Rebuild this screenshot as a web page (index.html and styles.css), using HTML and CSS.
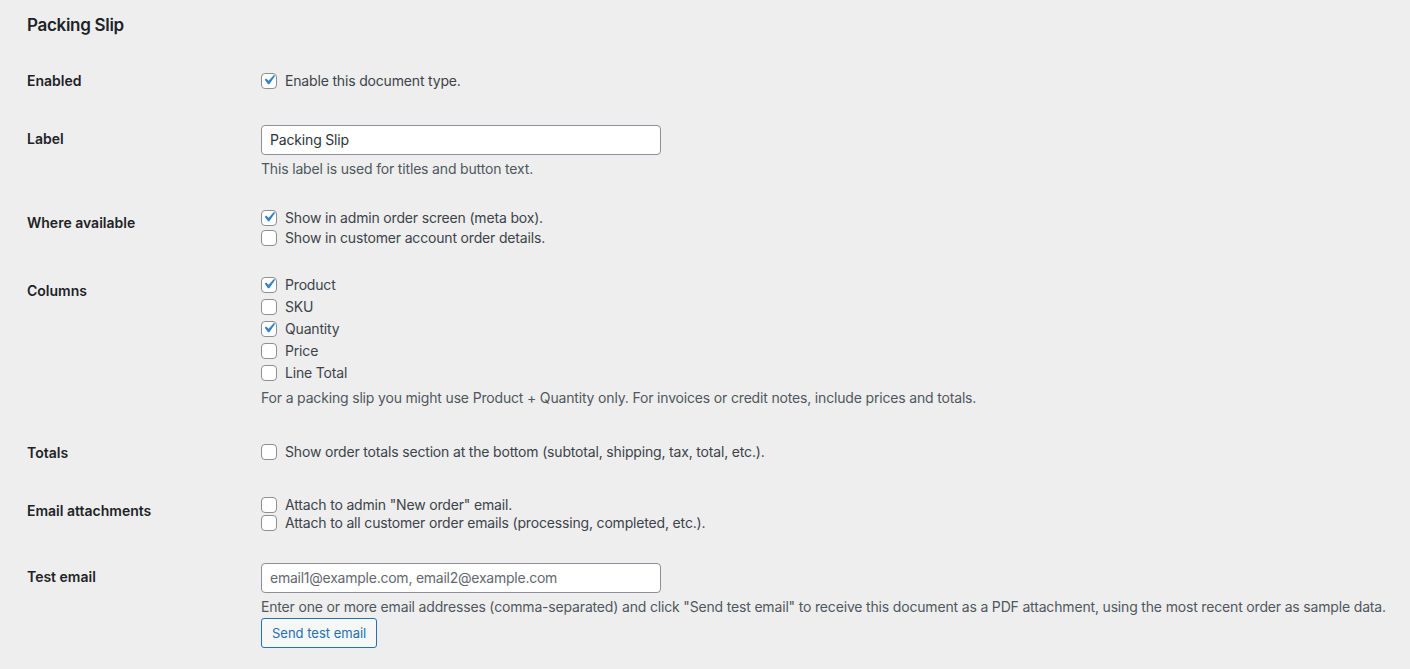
FILE: index.html
```html
<!DOCTYPE html>
<html lang="en">
<head>
<meta charset="utf-8">
<title>Packing Slip</title>
<link rel="stylesheet" href="styles.css">
</head>
<body>
<div class="page">
  <h2 class="title">Packing Slip</h2>

  <div class="row row-enabled">
    <div class="row-label">Enabled</div>
    <div class="row-field">
      <label class="check"><span class="cb on"><svg viewBox="0 0 20 20"><path d="M14.83 4.89l1.34.94-5.81 8.38H9.02L5.78 9.67l1.34-1.25 2.57 2.4z"/></svg></span>Enable this document type.</label>
    </div>
  </div>

  <div class="row row-label-field">
    <div class="row-label">Label</div>
    <div class="row-field">
      <div class="input">Packing Slip</div>
      <p class="description">This label is used for titles and button text.</p>
    </div>
  </div>

  <div class="row row-where">
    <div class="row-label">Where available</div>
    <div class="row-field">
      <label class="check"><span class="cb on"><svg viewBox="0 0 20 20"><path d="M14.83 4.89l1.34.94-5.81 8.38H9.02L5.78 9.67l1.34-1.25 2.57 2.4z"/></svg></span>Show in admin order screen (meta box).</label>
      <label class="check"><span class="cb"></span>Show in customer account order details.</label>
    </div>
  </div>

  <div class="row row-columns">
    <div class="row-label">Columns</div>
    <div class="row-field">
      <label class="check"><span class="cb on"><svg viewBox="0 0 20 20"><path d="M14.83 4.89l1.34.94-5.81 8.38H9.02L5.78 9.67l1.34-1.25 2.57 2.4z"/></svg></span>Product</label>
      <label class="check"><span class="cb"></span>SKU</label>
      <label class="check"><span class="cb on"><svg viewBox="0 0 20 20"><path d="M14.83 4.89l1.34.94-5.81 8.38H9.02L5.78 9.67l1.34-1.25 2.57 2.4z"/></svg></span>Quantity</label>
      <label class="check"><span class="cb"></span>Price</label>
      <label class="check"><span class="cb"></span>Line Total</label>
      <p class="description">For a packing slip you might use Product + Quantity only. For invoices or credit notes, include prices and totals.</p>
    </div>
  </div>

  <div class="row row-totals">
    <div class="row-label">Totals</div>
    <div class="row-field">
      <label class="check"><span class="cb"></span>Show order totals section at the bottom (subtotal, shipping, tax, total, etc.).</label>
    </div>
  </div>

  <div class="row row-email">
    <div class="row-label">Email attachments</div>
    <div class="row-field">
      <label class="check"><span class="cb"></span>Attach to admin "New order" email.</label>
      <label class="check"><span class="cb"></span>Attach to all customer order emails (processing, completed, etc.).</label>
    </div>
  </div>

  <div class="row row-test">
    <div class="row-label">Test email</div>
    <div class="row-field">
      <div class="input placeholder">email1@example.com, email2@example.com</div>
      <p class="description nowrap">Enter one or more email addresses (comma-separated) and click "Send test email" to receive this document as a PDF attachment, using the most recent order as sample data.</p>
      <button class="button" type="button">Send test email</button>
    </div>
  </div>
</div>
</body>
</html>
```

FILE: styles.css
```css
html, body {
  margin: 0;
  padding: 0;
  background: #eeeeee;
}

body {
  font-family: Inter, "Noto Sans", "Liberation Sans", sans-serif;
  font-size: 14px;
  color: #1d2327;
}

.page {
  padding: 0 0 0 27px;
}

.title {
  margin: 0;
  padding-top: 14px;
  height: 52px;
  line-height: 22px;
  font-size: 17px;
  font-weight: 600;
  letter-spacing: -0.3px;
  color: #1d2327;
  box-sizing: border-box;
}

.row {
  display: grid;
  grid-template-columns: 234px 1fr;
}

.row-label {
  padding-top: 20px;
  line-height: 18px;
  font-size: 14px;
  font-weight: 600;
  color: #1d2327;
}

.row-field {
  display: flex;
  flex-direction: column;
  align-items: flex-start;
  letter-spacing: -0.17px;
}

.check {
  display: flex;
  align-items: center;
  gap: 8px;
  height: 20px;
  line-height: 20px;
  color: #3c434a;
  white-space: nowrap;
}

.cb {
  box-sizing: border-box;
  width: 16px;
  height: 16px;
  border: 1px solid #8c8f94;
  border-radius: 4px;
  background: #fff;
  display: flex;
  align-items: center;
  justify-content: center;
  flex: none;
}

.cb svg {
  width: 20px;
  height: 20px;
  fill: #3582c4;
  margin: -2px 0 0 -1px;
  flex: none;
}

.input {
  box-sizing: border-box;
  width: 400px;
  height: 30px;
  border: 1px solid #8c8f94;
  border-radius: 4px;
  background: #fff;
  padding: 0 8px;
  line-height: 28px;
  color: #2c3338;
}

.input.placeholder {
  color: #646970;
  letter-spacing: -0.24px;
}

.description {
  margin: 4px 0 0;
  line-height: 20px;
  color: #50575e;
  font-size: 14px;
}

.description.nowrap {
  white-space: nowrap;
}

.button {
  box-sizing: border-box;
  margin-top: 1px;
  height: 30px;
  padding: 0 10px;
  border: 1px solid #2271b1;
  border-radius: 3px;
  background: #f6f7f7;
  color: #2271b1;
  font-family: inherit;
  font-size: 13px;
  line-height: 28px;
  letter-spacing: 0;
  cursor: pointer;
}

/* Row-specific vertical rhythm */
.row-enabled .row-field { padding: 19px 0 19px; }

.row-label-field .row-field { padding: 15px 0 15px; }

.row-where .row-field { padding: 14px 0 14px; }

.row-columns .row-field { padding: 12px 0 16px; }
.row-columns .check { height: 22px; line-height: 22px; }

.row-totals .row-field { padding: 18px 0 20px; }

.row-email .row-field { padding: 14px 0 16px; }
.row-email .check { height: 18px; line-height: 18px; }

.row-test .row-field { padding: 15px 0 20px; }
```
